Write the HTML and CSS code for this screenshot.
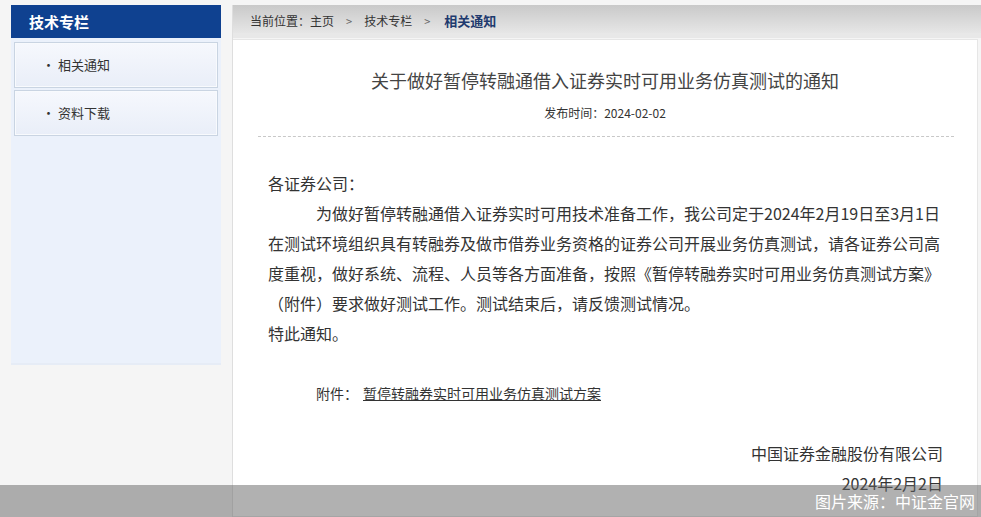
FILE: index.html
```html
<!DOCTYPE html>
<html lang="zh">
<head>
<meta charset="utf-8">
<title>相关通知</title>
<link rel="stylesheet" href="styles.css">
</head>
<body>
<div class="page">
  <aside class="sidebar">
    <div class="side-head">技术专栏</div>
    <div class="side-body">
      <div class="side-item">· 相关通知</div>
      <div class="side-item">· 资料下载</div>
    </div>
  </aside>
  <main class="main">
    <div class="crumb">
      <span>当前位置：主页</span><span class="sep">&gt;</span><span>技术专栏</span><span class="sep">&gt;</span><span class="cur">相关通知</span>
    </div>
    <div class="article">
      <h1 class="title">关于做好暂停转融通借入证券实时可用业务仿真测试的通知</h1>
      <div class="date">发布时间：2024-02-02</div>
      <div class="rule"></div>
      <div class="body">
        <p>各证券公司：</p>
        <p class="indent">为做好暂停转融通借入证券实时可用技术准备工作，我公司定于2024年2月19日至3月1日在测试环境组织具有转融券及做市借券业务资格的证券公司开展业务仿真测试，请各证券公司高度重视，做好系统、流程、人员等各方面准备，按照《暂停转融券实时可用业务仿真测试方案》（附件）要求做好测试工作。测试结束后，请反馈测试情况。</p>
        <p>特此通知。</p>
        <p class="blank">&nbsp;</p>
        <p class="indent attach">附件：<a class="link" href="#">暂停转融券实时可用业务仿真测试方案</a></p>
        <p class="blank">&nbsp;</p>
        <p class="right">中国证券金融股份有限公司</p>
        <p class="right">2024年2月2日</p>
      </div>
    </div>
  </main>
</div>
<div class="watermark">图片来源：中证金官网</div>
</body>
</html>
```

FILE: styles.css
```css
html, body {
  margin: 0;
  padding: 0;
  height: 100%;
  overflow: hidden;
}
body {
  background: #f5f5f5;
  font-family: "Noto Sans CJK SC", "Noto Sans", sans-serif;
  color: #333;
  position: relative;
}
.page {
  display: flex;
  gap: 11px;
  padding: 5px 0 0 11px;
  height: 100%;
  box-sizing: border-box;
}
.sidebar {
  width: 210px;
  flex: none;
}
.side-head {
  height: 33px;
  line-height: 33px;
  background: #0f4190;
  color: #fff;
  font-weight: bold;
  font-size: 15px;
  padding-left: 18px;
}
.side-body {
  background: #ebf1fb;
  height: 327px;
  padding: 4px 3px;
  box-sizing: border-box;
  border-bottom: 2px solid #e6ecf6;
}
.side-item {
  height: 44px;
  line-height: 44px;
  border: 1px solid #c9d4e2;
  background: linear-gradient(#f6f8fd, #e9eef8);
  box-shadow: inset 0 0 0 1px #f8fafd;
  font-size: 13px;
  color: #333;
  padding-left: 27px;
  margin-bottom: 2px;
}
.main {
  flex: 1;
  display: flex;
  flex-direction: column;
  border-left: 1px solid #dedede;
  min-width: 0;
}
.crumb {
  height: 28px;
  line-height: 32px;
  background: linear-gradient(#c9c9c9, #e6e6e6);
  border-bottom: 5px solid #e8e8e8;
  font-size: 12px;
  color: #333;
  padding-left: 17px;
  display: flex;
}
.crumb .sep {
  color: #666;
  margin: 0 12px;
  font-size: 11px;
}
.crumb .cur {
  font-weight: bold;
  font-size: 13px;
  color: #1f3a6e;
  margin-left: 2px;
}
.article {
  flex: 1;
  margin-top: 1px;
  margin-right: 3px;
  background: #fff;
  border: 1px solid #e6e6e6;
  border-left: none;
}
.title {
  margin: 28px 0 0;
  font-size: 18px;
  font-weight: normal;
  line-height: 24px;
  text-align: center;
  color: #444;
}
.date {
  margin-top: 12px;
  font-size: 12px;
  line-height: 18px;
  text-align: center;
  color: #333;
}
.rule {
  margin: 14px 23px 0 25px;
  border-top: 1px dashed #c8c8c8;
}
.body {
  margin: 31px 34px 0 35px;
  font-size: 16px;
  line-height: 30px;
  color: #333;
}
.body p {
  margin: 0;
}
.indent {
  text-indent: 48px;
}
.attach {
  font-size: 14px;
}
.link {
  color: #333;
  text-decoration: underline;
  margin-left: 5px;
}
.right {
  text-align: right;
}
.watermark {
  position: absolute;
  left: 0;
  right: 0;
  bottom: 0;
  height: 32px;
  line-height: 32px;
  background: rgba(100, 100, 100, 0.5);
  color: #fff;
  font-size: 16px;
  text-align: right;
  padding-right: 6px;
}
```
